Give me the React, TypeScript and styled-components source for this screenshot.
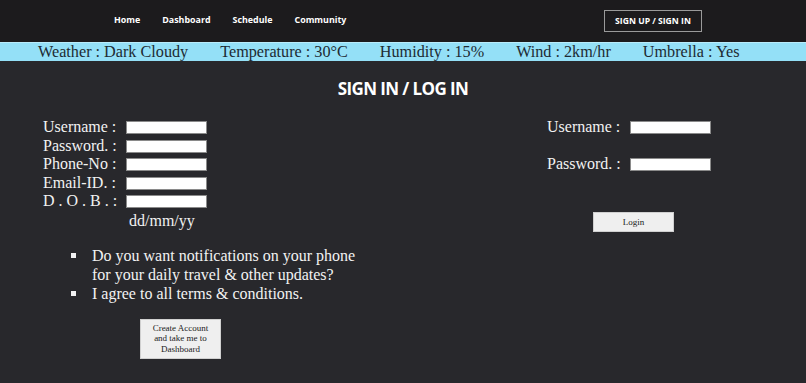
import React from "react";
import styled, { createGlobalStyle } from "styled-components";

const Global = createGlobalStyle`
  html, body { margin: 0; padding: 0; background: #28282c; }
  body { font-family: "Liberation Serif", "Times New Roman", serif; }
  * { box-sizing: border-box; }
`;

const Page = styled.div`
  width: 806px;
  height: 383px;
  background: #28282c;
  overflow: hidden;
`;

const Header = styled.header`
  height: 42px;
  background: #1c1b1d;
  display: flex;
  align-items: center;
  padding-left: 114px;
  padding-right: 104px;
`;

const Nav = styled.nav`
  display: flex;
  gap: 22px;
  margin-top: -4px;
`;

const NavLink = styled.a`
  font-family: "Open Sans", sans-serif;
  font-weight: 700;
  font-size: 8.9px;
  color: #ffffff;
  text-decoration: none;
`;

const SignButton = styled.button`
  margin-left: auto;
  width: 98px;
  height: 22px;
  background: transparent;
  border: 1px solid #9a9a9a;
  color: #ffffff;
  font-family: "Open Sans", sans-serif;
  font-weight: 700;
  font-size: 8.6px;
  padding: 0;
`;

const WeatherBar = styled.div`
  height: 19px;
  background: #94e0f7;
  border-top: 1px solid #b9ecfb;
  display: flex;
  align-items: center;
  padding-left: 38px;
  gap: 32px;
  font-size: 16.2px;
  color: #1d2b33;
  white-space: nowrap;
`;

const Title = styled.h1`
  margin: 0;
  padding-top: 17px;
  text-align: center;
  font-family: "Open Sans", sans-serif;
  font-weight: 700;
  font-size: 17px;
  color: #ffffff;
  letter-spacing: -0.6px;
  line-height: 22px;
`;

const Columns = styled.div`
  display: flex;
  justify-content: space-between;
  padding: 18px 95px 0 43px;
`;

const LeftCol = styled.div`
  display: flex;
  flex-direction: column;
`;

const FieldGrid = styled.div`
  display: grid;
  grid-template-columns: 83px auto;
  align-items: center;
  color: #f2f2f2;
  font-size: 16px;
  line-height: 18.5px;
`;

const Label = styled.span`
  white-space: nowrap;
`;

const Input = styled.input`
  width: 81px;
  height: 13px;
  background: #ffffff;
  border: 1px solid #8a8a8a;
  padding: 0;
  margin-top: 1px;
`;

const Hint = styled.div`
  margin-left: 86px;
  color: #f2f2f2;
  font-size: 16px;
  line-height: 18px;
  margin-top: 1px;
`;

const List = styled.ul`
  margin: 16px 0 0 0;
  padding-left: 28px;
  list-style: none;
  color: #f2f2f2;
  font-size: 16px;
  line-height: 19px;
`;

const Item = styled.li`
  position: relative;
  padding-left: 21px;
  &::before {
    content: "";
    position: absolute;
    left: 0;
    top: 7px;
    width: 5px;
    height: 5px;
    background: #f2f2f2;
  }
`;

const CreateButton = styled.button`
  margin: 16px 0 0 97px;
  width: 81px;
  height: 40px;
  background: #efefef;
  border: 1px solid #d0d0d0;
  font-family: "Liberation Serif", serif;
  font-size: 9px;
  line-height: 10.5px;
  color: #222;
  padding: 0 6px;
`;

const RightCol = styled.div`
  display: flex;
  flex-direction: column;
  width: 165px;
`;

const RightRow = styled.div`
  display: flex;
  align-items: center;
  color: #f2f2f2;
  font-size: 16px;
  line-height: 18px;
  margin-bottom: 19px;
`;

const RightLabel = styled.span`
  width: 83px;
  margin-left: 1px;
  white-space: nowrap;
`;

const LoginButton = styled.button`
  margin: 20px 0 0 47px;
  width: 81px;
  height: 20px;
  background: #efefef;
  border: 1px solid #d0d0d0;
  font-family: "Liberation Serif", serif;
  font-size: 9px;
  color: #222;
  padding: 0;
`;

export default function App() {
  return (
    <Page>
      <Global />
      <Header>
        <Nav>
          <NavLink>Home</NavLink>
          <NavLink>Dashboard</NavLink>
          <NavLink>Schedule</NavLink>
          <NavLink>Community</NavLink>
        </Nav>
        <SignButton>SIGN UP / SIGN IN</SignButton>
      </Header>
      <WeatherBar>
        <span>Weather : Dark Cloudy</span>
        <span>Temperature : 30°C</span>
        <span>Humidity : 15%</span>
        <span>Wind : 2km/hr</span>
        <span>Umbrella : Yes</span>
      </WeatherBar>
      <Title>SIGN IN / LOG IN</Title>
      <Columns>
        <LeftCol>
          <FieldGrid>
            <Label>Username :</Label>
            <Input />
            <Label>Password. :</Label>
            <Input />
            <Label>Phone-No :</Label>
            <Input />
            <Label>Email-ID. :</Label>
            <Input />
            <Label>D . O . B . :</Label>
            <Input />
          </FieldGrid>
          <Hint>dd/mm/yy</Hint>
          <List>
            <Item>
              Do you want notifications on your phone
              <br />
              for your daily travel &amp; other updates?
            </Item>
            <Item>I agree to all terms &amp; conditions.</Item>
          </List>
          <CreateButton>Create Account and take me to Dashboard</CreateButton>
        </LeftCol>
        <RightCol>
          <RightRow>
            <RightLabel>Username :</RightLabel>
            <Input />
          </RightRow>
          <RightRow>
            <RightLabel>Password. :</RightLabel>
            <Input />
          </RightRow>
          <LoginButton>Login</LoginButton>
        </RightCol>
      </Columns>
    </Page>
  );
}
